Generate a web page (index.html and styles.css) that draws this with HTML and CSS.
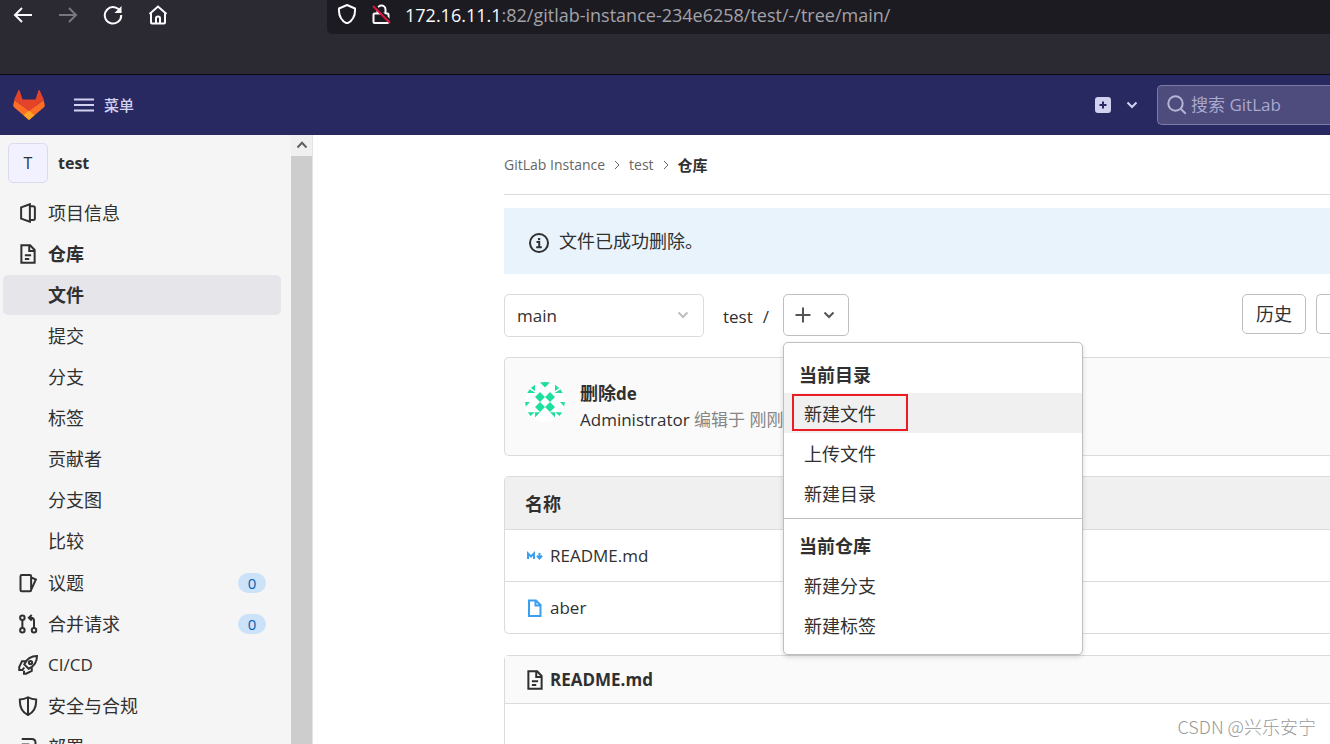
FILE: index.html
```html
<!DOCTYPE html>
<html lang="zh-CN">
<head>
<meta charset="utf-8">
<title>仓库 · test · GitLab</title>
<link rel="stylesheet" href="styles.css">
</head>
<body>
<div class="browser">
  <div class="browser-nav">
    <button class="browser-btn" aria-label="后退"><svg viewBox="0 0 20 20"><path d="M19 10H2M9 3l-7 7 7 7"/></svg></button>
    <button class="browser-btn dim" aria-label="前进"><svg viewBox="0 0 20 20"><path d="M1 10h17M11 3l7 7-7 7"/></svg></button>
    <button class="browser-btn" aria-label="刷新"><svg viewBox="0 0 20 20"><path d="M17.5 7A8.200 8.200 0 1 0 18.200 10"/><path class="solid" d="M18.500 1v7h-7z"/></svg></button>
    <button class="browser-btn" aria-label="主页"><svg viewBox="0 0 20 20"><path d="M1.500 9 10 1.500 18.500 9M3 8v9.500q0 1 1 1h12q1 0 1-1V8M8 18v-5q0-1.500 2-1.500t2 1.500v5"/></svg></button>
  </div>
  <div class="address">
    <svg class="address-icon" viewBox="0 0 20 20"><path d="M10 1 18 4.500c.5 7-2 12-8 15-6-3-8.500-8-8-15z"/></svg>
    <svg class="address-icon" viewBox="0 0 20 20"><path d="M6.500 9V5.500a4 4 0 0 1 8 0V9M3.500 9.500h13q1 0 1 1v7.500q0 1-1 1h-13q-1 0-1-1v-7.500q0-1 1-1z"/><path class="slash-gap" d="M3.500 1 20 17.500"/><path class="slash" d="M2 2 19 19"/></svg>
    <span class="url"><b>172.16.11.1</b>:82/gitlab-instance-234e6258/test/-/tree/main/</span>
  </div>
</div>

<header class="navbar">
  <a class="logo" href="#" aria-label="GitLab"><svg viewBox="0 0 32 30"><path fill="#e24329" d="M16 30 6 10H1L5.500 0Q6 -.3 6.500.3L9.500 9.500h13L25.500.3Q26 -.3 26.500 0L31 10h-5z"/><path fill="#fc6d26" d="M1.500 10 .3 14.500q-.4 2 1 3L16 30 30.700 17.500q1.400-1 1-3L30.500 10 16 21z"/><path fill="#e24329" d="M1.500 10h29L16 21z"/><path fill="#fca326" d="M16 20.500 10.500 25.300 16 30l5.500-4.700z"/></svg></a>
  <button class="menu-btn"><svg viewBox="0 0 20 14"><path d="M0 1.500h20M0 7h20M0 12.500h20"/></svg>菜单</button>
  <div class="nav-right">
    <button class="new-btn" aria-label="新建"><svg class="plus-square" viewBox="0 0 16 16"><rect width="16" height="16" rx="3"/><path d="M8 4.500v7M4.500 8h7"/></svg><svg class="chevron" viewBox="0 0 12 12"><path d="m1.500 3.500 4.500 4.500 4.500-4.500"/></svg></button>
    <label class="search"><svg viewBox="0 0 20 20"><circle cx="8.500" cy="8.500" r="7.200"/><path d="m13.700 13.700 5 5"/></svg><input type="text" placeholder="搜索 GitLab" aria-label="搜索 GitLab"></label>
  </div>
</header>

<div class="shell">
  <aside class="sidebar">
    <nav class="side-nav">
      <a class="project" href="#"><span class="project-avatar">T</span><b>test</b></a>
      <ul class="side-list">
        <li><a class="side-item" href="#"><svg viewBox="0 0 16 16"><path d="M9.500 1 2.500 3.500v9L9.500 15zM9.500 2.500H12q1.500 0 1.500 1.200v8.600q0 1.200-1.500 1.200H9.500"/></svg>项目信息</a></li>
        <li><a class="side-item strong" href="#"><svg viewBox="0 0 16 16"><path d="M2.700 1h7l3.600 3.800V15H2.700zM9 1v4.500h4M5.500 9h5M5.500 12H9"/></svg>仓库</a>
          <ul class="side-list sub">
            <li><a class="side-item active" href="#">文件</a></li>
            <li><a class="side-item" href="#">提交</a></li>
            <li><a class="side-item" href="#">分支</a></li>
            <li><a class="side-item" href="#">标签</a></li>
            <li><a class="side-item" href="#">贡献者</a></li>
            <li><a class="side-item" href="#">分支图</a></li>
            <li><a class="side-item" href="#">比较</a></li>
          </ul>
        </li>
        <li><a class="side-item" href="#"><svg viewBox="0 0 16 16"><path d="M3 1.500h6.500q1 0 1 1v11q0 1-1 1H3q-1 0-1-1v-11q0-1 1-1zM10.500 3.500l3.800 1.700-3.800 8.300"/></svg>议题<span class="badge">0</span></a></li>
        <li><a class="side-item" href="#"><svg viewBox="0 0 16 16"><circle cx="3.500" cy="3" r="1.800"/><circle cx="3.500" cy="13" r="1.800"/><circle cx="12.800" cy="13" r="1.800"/><path d="M3.500 5v6M12.800 11V5.500q0-2.500-2.500-2.500H9M11 .8 8.700 3 11 5.200"/></svg>合并请求<span class="badge">0</span></a></li>
        <li><a class="side-item latin" href="#"><svg viewBox="0 0 16 16"><path d="M15.200.8Q8 .8 5 7.500L8.500 11Q15.200 8 15.200.8zM6 5H3.200L1 9.500v2.500h2.500L5 10M11 10v2.800L6.500 15H4.800v-2.500"/><circle cx="10" cy="6" r="1.300"/></svg>CI/CD</a></li>
        <li><a class="side-item" href="#"><svg viewBox="0 0 16 16"><path d="M8 1q3 1.800 6.500 1.800Q15 12 8 15.200 1 12 1.500 2.800 5 2.800 8 1zM8 1v14"/></svg>安全与合规</a></li>
        <li><a class="side-item" href="#"><svg viewBox="0 0 16 16"><path d="M3 1.500h8q3 0 3 3v7q0 3-3 3H3M3 6h6M3 10h6"/></svg>部署</a></li>
      </ul>
    </nav>
    <div class="scrollbar"><svg viewBox="0 0 12 12"><path d="M1.500 8.500 6 3.800l4.500 4.700"/></svg><div class="thumb"></div></div>
  </aside>

  <main class="content">
    <nav class="crumbs"><a href="#">GitLab Instance</a><svg viewBox="0 0 8 10"><path d="m2 1 4 4-4 4"/></svg><a href="#">test</a><svg viewBox="0 0 8 10"><path d="m2 1 4 4-4 4"/></svg><b>仓库</b></nav>
    <div class="alert" role="status"><svg viewBox="0 0 20 20"><circle cx="10" cy="10" r="9"/><path d="M7.500 9h2.700v5.300M7.200 14.300h5.600"/><path class="dot" d="M9 5h2.200v2.200H9z"/></svg>文件已成功删除。</div>

    <div class="toolbar">
      <div class="branch"><select aria-label="分支"><option>main</option></select><svg viewBox="0 0 12 12"><path d="m1.500 3.500 4.500 4.500 4.500-4.500"/></svg></div>
      <div class="path"><a href="#">test</a><span>/</span></div>
      <div class="add">
        <button class="btn add-btn" aria-label="添加"><svg class="plus" viewBox="0 0 16 16"><path d="M8 .5v15M.5 8h15"/></svg><svg class="chevron" viewBox="0 0 12 12"><path d="m1.500 3.500 4.500 4.500 4.500-4.500"/></svg></button>
        <div class="menu">
          <h4>当前目录</h4>
          <a class="menu-item hover" href="#">新建文件<span class="mark"></span></a>
          <a class="menu-item" href="#">上传文件</a>
          <a class="menu-item" href="#">新建目录</a>
          <hr>
          <h4>当前仓库</h4>
          <a class="menu-item" href="#">新建分支</a>
          <a class="menu-item" href="#">新建标签</a>
        </div>
      </div>
      <div class="actions"><button class="btn">历史</button><button class="btn cut" aria-label="查找文件"></button></div>
    </div>

    <section class="commit">
      <svg class="avatar" viewBox="0 0 40 40"><circle cx="20" cy="20" r="20" fill="#fff"/><g fill="#1fdf9c"><path d="M15 10l5 5 5-5 5 5-5 5 5 5-5 5-5-5-5 5-5-5 5-5-5-5z"/><path fill="#fff" d="m20 15 5 5-5 5-5-5z"/><path d="M15 .6 20 5.500 25 .6Q20 -.6 15 .6z"/><path d="M10 2.700V9L5.800 6zM4.600 7.300 10.500 11H2.300zM.1 20H5l-4.200 4.500zM2.900 30.200h7L5.400 34zM10 30.200h5l-5 5.300z"/><path d="M30 2.700V9l4.200-3zM35.400 7.300 29.500 11h8.200zM39.900 20H35l4.200 4.500zM37.100 30.200h-7l4.500 3.800zM30 30.200h-5l5 5.300z"/></g></svg>
      <div><b>删除<span class="latin">de</span></b><p><a href="#">Administrator</a> 编辑于 刚刚</p></div>
    </section>

    <table class="files">
      <thead><tr><th>名称</th></tr></thead>
      <tbody>
        <tr><td><a href="#"><svg class="md" viewBox="0 0 20 20"><path d="M3 13V7.500l3 3 3-3V13M14.500 7v5M12 9.800l2.500 2.700L17 9.800"/></svg>README.md</a></td></tr>
        <tr><td><a href="#"><svg class="file" viewBox="0 0 20 20"><path d="M4 2.500h7l4.500 4.500v11H4zM10.500 2.500V7.500h5"/></svg>aber</a></td></tr>
      </tbody>
    </table>

    <section class="readme">
      <h3><svg viewBox="0 0 16 16"><path d="M2.700 1h7l3.600 3.800V15H2.700zM9 1v4.500h4M5.500 9h5M5.500 12H9"/></svg>README.md</h3>
    </section>
  </main>
</div>
<div class="watermark">CSDN @兴乐安宁</div>
</body>
</html>
```
FILE: styles.css
```css
* { box-sizing: border-box; }
body {
  margin: 0;
  height: 100vh;
  display: flex;
  flex-direction: column;
  overflow: hidden;
  background: #fff;
  color: #303030;
  font: 18px/24px "Open Sans", "Noto Sans CJK SC", sans-serif;
}
a { color: inherit; text-decoration: none; }
button, input, select { font: inherit; color: inherit; }
button { padding: 0; border: 0; background: none; }
ul, p, h3, h4 { margin: 0; padding: 0; list-style: none; font-size: inherit; }
svg { flex: none; fill: none; stroke: currentColor; stroke-width: 2; }
.latin { font-size: 17px; }

.browser {
  flex: none;
  height: 75px;
  display: flex;
  align-items: flex-start;
  background: #2b2a33;
  border-bottom: 1px solid #0c0c0d;
  color: #fbfbfe;
}
.browser-nav { width: 327px; display: flex; gap: 25px; padding: 5px 13px; }
.browser-btn { width: 20px; height: 20px; }
.browser-btn svg { display: block; width: 20px; height: 20px; }
.browser-btn .solid { fill: currentColor; stroke: none; }
.dim { color: #77767e; }
.address {
  flex: 1;
  height: 34px;
  display: flex;
  gap: 14px;
  padding: 4px 10px;
  background: #1c1b22;
  border-radius: 0 0 0 5px;
}
.address-icon { width: 20px; height: 20px; }
.slash { stroke: #e2143c; }
.slash-gap { stroke: #1c1b22; }
.url { color: #a3a2a8; line-height: 22px; white-space: nowrap; }
.url b { font-weight: 400; color: #fbfbfe; }

.navbar {
  flex: none;
  height: 60px;
  display: flex;
  align-items: center;
  padding-left: 13px;
  background: #292961;
  color: #d1d1f0;
}
.logo svg { display: block; width: 32px; height: 30px; stroke: none; }
.menu-btn { display: flex; align-items: center; gap: 10px; margin-left: 29px; font-size: 15px; font-weight: 500; }
.menu-btn svg { width: 20px; height: 14px; }
.nav-right { margin-left: auto; display: flex; align-items: center; gap: 19px; }
.new-btn { display: flex; align-items: center; gap: 15px; }
.plus-square { width: 16px; height: 16px; }
.plus-square rect { fill: currentColor; stroke: none; }
.plus-square path { stroke: #292961; }
.chevron { width: 12px; height: 12px; }
.search {
  width: 173px;
  height: 40px;
  display: flex;
  align-items: center;
  gap: 4px;
  padding-left: 9px;
  background: #4d4c7d;
  border: 1px solid #7c7ba6;
  border-right: 0;
  border-radius: 5px 0 0 5px;
  color: #b4b4d6;
}
.search svg { width: 20px; height: 20px; }
.search input { flex: 1; min-width: 0; padding: 0; border: 0; background: none; outline: 0; font-size: 17px; }
.search input::placeholder { color: #a9a8cf; opacity: 1; }

.shell { flex: 1; min-height: 0; display: flex; }
.sidebar { flex: none; width: 313px; display: flex; overflow: hidden; background: #f5f5f5; }
.side-nav { flex: 1; }
.project { display: flex; align-items: center; gap: 10px; padding: 8px; margin-bottom: 2px; font-size: 16px; }
.project-avatar {
  width: 40px;
  height: 40px;
  display: grid;
  place-items: center;
  background: #f1f1ff;
  border: 1px solid #dbdaf0;
  border-radius: 5px;
}
.side-list { display: flex; flex-direction: column; gap: 1px; padding: 0 10px 0 3px; }
.side-list .sub { padding: 1px 0; margin-left: 0; }
.side-item { height: 40px; display: flex; align-items: center; gap: 10px; padding: 0 15px; border-radius: 5px; }
.side-item svg { width: 20px; height: 20px; stroke-width: 1.6; }
.sub .side-item { padding-left: 45px; }
.strong, .side-item.active { font-weight: 700; }
.side-item.active { background: #e5e5ea; }
.badge {
  width: 28px;
  height: 20px;
  margin-left: auto;
  border-radius: 10px;
  background: #cbe2f9;
  color: #0b5cad;
  font-size: 15px;
  line-height: 20px;
  text-align: center;
}
.scrollbar { width: 22px; display: flex; flex-direction: column; align-items: center; background: #f0f0f0; border-right: 1px solid #e4e4e4; color: #606060; }
.scrollbar svg { width: 12px; height: 12px; margin: 4px 0 5px; }
.thumb { flex: 1; width: 100%; background: #cdcdcd; }

.content { flex: 1; min-width: 0; padding-left: 191px; }
.crumbs { height: 60px; display: flex; align-items: center; gap: 8px; border-bottom: 1px solid #dbdbdb; font-size: 14px; color: #666; }
.crumbs svg { width: 8px; height: 10px; stroke-width: 1; }
.crumbs b { color: #303030; font-size: 15px; }
.alert { height: 66px; display: flex; align-items: center; gap: 10px; margin: 13px 0 20px; padding: 0 25px; background: #e9f3fc; }
.alert svg { width: 20px; height: 20px; margin-top: 4px; }
.alert .dot { fill: currentColor; stroke: none; }

.toolbar { display: flex; align-items: flex-start; margin-bottom: 20px; }
.branch { position: relative; width: 200px; font-size: 17px; }
.branch select {
  width: 100%;
  height: 43px;
  padding: 0 12px;
  border: 1px solid #dbdbdb;
  border-radius: 5px;
  background: #fff;
  appearance: none;
}
.branch svg { position: absolute; right: 15px; top: 15px; width: 12px; height: 12px; color: #bfbfbf; }
.path { display: flex; gap: 10px; width: 79px; padding: 11px 0 0 19px; font-size: 17px; }
.add { position: relative; }
.btn { height: 40px; padding: 0 13px; border: 1px solid #bfbfbf; border-radius: 5px; background: #fff; }
.add-btn { width: 66px; height: 42px; display: flex; align-items: center; gap: 12px; padding: 0 11px; color: #555; }
.plus { width: 16px; height: 16px; }
.menu {
  position: absolute;
  z-index: 1;
  top: 48px;
  left: 0;
  width: 300px;
  padding-bottom: 9px;
  background: #fff;
  border: 1px solid #bfbfbf;
  border-radius: 5px;
  box-shadow: 0 2px 5px rgba(0, 0, 0, .15);
}
.menu h4 { padding: 20px 15px 6px; }
.menu hr { height: 1px; margin: 5px 0 0; border: 0; background: #bfbfbf; }
.menu hr + h4 { padding: 15px 15px 7px; }
.menu-item { position: relative; display: block; padding: 9px 20px 7px; }
.hover { background: #f0f0f0; }
.mark { position: absolute; top: 1px; left: 8px; width: 116px; height: 37px; border: 2px solid #ec1c24; }
.actions { margin-left: auto; display: flex; gap: 10px; }
.cut { width: 14px; padding: 0; border-right: 0; border-radius: 5px 0 0 5px; }

.commit {
  height: 99px;
  display: flex;
  gap: 15px;
  padding: 22px 20px;
  margin-bottom: 20px;
  background: #fafafa;
  border: 1px solid #dbdbdb;
  border-right: 0;
  border-radius: 5px 0 0 5px;
  line-height: 26px;
}
.commit p { color: #868686; font-size: 17px; }
.commit a { color: #303030; }
.avatar { width: 40px; height: 40px; stroke: none; margin-top: 2px; }

.files { width: 100%; margin-bottom: 21px; border: 1px solid #dbdbdb; border-right: 0; border-radius: 5px 0 0 5px; border-spacing: 0; overflow: hidden; }
.files th, .files td { height: 52px; padding: 0 20px; text-align: left; }
.files th { padding-top: 2px; background: #f0f0f0; }
.files td { border-top: 1px solid #dbdbdb; font-size: 17px; }
.files a { display: flex; align-items: center; gap: 5px; }
.files svg { width: 20px; height: 20px; color: #3b9ff0; }

.readme { height: 200px; border: 1px solid #dbdbdb; border-right: 0; border-radius: 5px 0 0 0; }
.readme h3 { height: 48px; display: flex; align-items: center; gap: 5px; padding: 0 20px; background: #fafafa; border-bottom: 1px solid #dbdbdb; font-size: 17px; }
.readme svg { width: 20px; height: 20px; stroke-width: 1.6; }

.watermark { position: absolute; right: 14px; bottom: 6px; color: #999; font-family: "Noto Sans CJK SC", sans-serif; font-weight: 300; }
```
